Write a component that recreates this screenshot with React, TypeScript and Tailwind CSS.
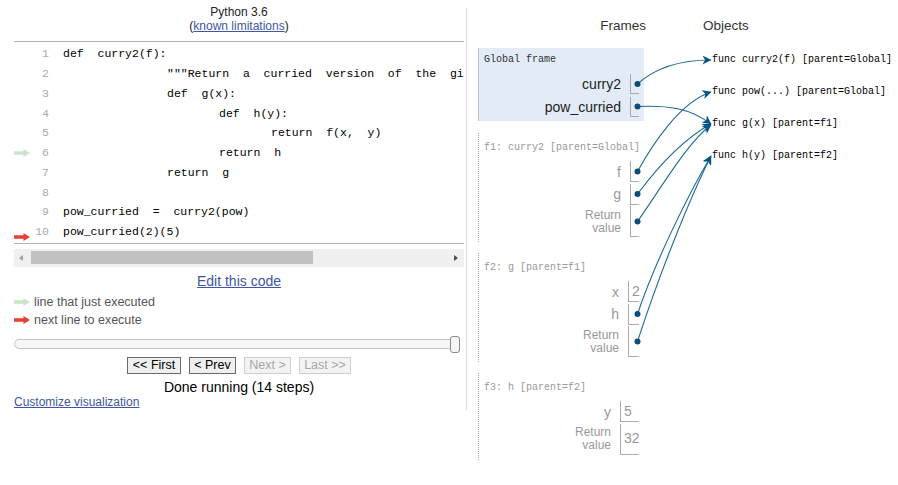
import React from 'react';

const sans = "font-['Liberation_Sans',Arial,sans-serif]";
const mono = "font-['Liberation_Mono','Courier_New',monospace]";

const codeLines = [
  { n: 1, pad: 'pl-0', text: 'def  curry2(f):' },
  { n: 2, pad: 'pl-[104px]', text: '"""Return  a  curried  version  of  the  given  two-argument  function."""' },
  { n: 3, pad: 'pl-[104px]', text: 'def  g(x):' },
  { n: 4, pad: 'pl-[156px]', text: 'def  h(y):' },
  { n: 5, pad: 'pl-[208px]', text: 'return  f(x,  y)' },
  { n: 6, pad: 'pl-[156px]', text: 'return  h' },
  { n: 7, pad: 'pl-[104px]', text: 'return  g' },
  { n: 8, pad: 'pl-0', text: '' },
  { n: 9, pad: 'pl-0', text: 'pow_curried  =  curry2(pow)' },
  { n: 10, pad: 'pl-0', text: 'pow_curried(2)(5)' },
];

function LineArrow({ color }: { color: string }) {
  return (
    <svg width="16" height="8" viewBox="0 0 16 8" className="block shrink-0">
      <path d="M0,2.3 H9.5 V0 L16,4 L9.5,8 V5.7 H0 Z" fill={color} />
    </svg>
  );
}

type Row = { label: string; two?: boolean; value?: string };

function Frame({
  title,
  active,
  rows,
  box,
  outer,
}: {
  title: string;
  active?: boolean;
  rows: Row[];
  box: string;
  outer: string;
}) {
  return (
    <div
      className={
        active
          ? 'w-[166px] bg-[#e2ebf6] border-l border-[#b9c4cc] pt-[6px] pb-[4.5px] ' + outer
          : 'w-[166px] border-l border-dotted border-[#aaaaaa] pt-[9px] pb-[5px] ' + outer
      }
    >
      <div className={mono + (active ? ' pl-[5px] text-[10px] leading-[12px] text-[#333]' : ' pl-[5px] text-[10px] leading-[12px] text-[#999]')}>
        {title}
      </div>
      <div className={active ? 'mt-[8px] flex flex-col gap-[2.5px] pr-[5px]' : 'mt-[7px] flex flex-col gap-[1.5px] pr-[5px]'}>
        {rows.map((r) => (
          <div
            key={r.label}
            className={
              active ? 'flex h-[20px] justify-end' : r.two ? 'flex h-[31px] justify-end' : 'flex h-[21px] justify-end'
            }
          >
            <div
              className={
                active
                  ? 'self-center pr-[9px] text-right text-[14px] leading-[16px] text-[#222]'
                  : r.two
                  ? 'self-center pr-[9px] text-right text-[12px] leading-[13px] text-[#999]'
                  : 'self-center pr-[9px] text-right text-[14px] leading-[16px] text-[#999]'
              }
            >
              {r.two ? (
                <>
                  Return
                  <br />
                  value
                </>
              ) : (
                r.label
              )}
            </div>
            <div className={'flex shrink-0 items-center border-l border-b border-[#aaaaaa] pl-[3px] text-[14px] text-[#999] ' + box}>
              {r.value}
            </div>
          </div>
        ))}
      </div>
    </div>
  );
}

export default function App() {
  return (
    <div className={'relative flex h-[485px] w-[898px] overflow-hidden bg-white ' + sans}>
      {/* Left: code and controls */}
      <div className="flex w-[466px] shrink-0 flex-col pl-[14px] pr-[2px]">
        <div className="pt-[5px] text-center text-[12px] leading-[14px] text-[#222]">
          <div>Python 3.6</div>
          <div>
            (<span className="text-[#3d58a2] underline">known limitations</span>)
          </div>
        </div>

        <div className="mt-[8px] overflow-hidden border-y border-[#b4b4b4] pt-[2px] pb-[1px]">
          {codeLines.map((l) => (
            <div key={l.n} className="flex h-[19.75px] items-center">
              <div className={l.n === 10 ? 'flex w-[16px] shrink-0 self-end pb-[0.5px]' : 'flex w-[16px] shrink-0'}>
                {l.n === 6 && <LineArrow color="#c9e6ca" />}
                {l.n === 10 && <LineArrow color="#e93f34" />}
              </div>
              <div className={mono + ' w-[19px] shrink-0 text-right text-[11.5px] text-[#aaaaaa]'}>{l.n}</div>
              <div className={mono + ' ml-[14px] shrink-0 whitespace-pre text-[11.5px] text-black ' + l.pad}>{l.text}</div>
            </div>
          ))}
        </div>

        {/* horizontal scrollbar */}
        <div className="mt-[5px] flex h-[18px] items-center bg-[#f0f0f0]">
          <div className="ml-[5px] h-0 w-0 border-y-[3.5px] border-r-[4px] border-y-transparent border-r-[#a3a3a3]" />
          <div className="ml-[8px] h-[13px] w-[282px] bg-[#c1c1c1]" />
          <div className="ml-auto mr-[6px] h-0 w-0 border-y-[3.5px] border-l-[4px] border-y-transparent border-l-[#505050]" />
        </div>

        <div className="mt-[6px] text-center text-[14px] leading-[17px] text-[#3d58a2] underline">Edit this code</div>

        <div className="mt-[3.5px] text-[12.5px] leading-[18px] text-[#555]">
          <div className="flex items-center gap-[4px]">
            <LineArrow color="#c9e6ca" />
            <span>line that just executed</span>
          </div>
          <div className="flex items-center gap-[4px]">
            <LineArrow color="#e93f34" />
            <span>next line to execute</span>
          </div>
        </div>

        {/* step slider */}
        <div className="relative mt-[10px] mr-[4px] h-[10px] rounded-full border border-[#c5c5c5] bg-[#f6f6f6]">
          <div className="absolute right-[-1px] top-[-4px] h-[17px] w-[10px] rounded-[3px] border border-[#8a8a8a] bg-[#f6f6f6]" />
        </div>

        <div className="mt-[8px] flex justify-center gap-[8px] text-[12.5px] leading-none">
          <div className="flex h-[17px] w-[54px] items-center justify-center border border-[#6a6a6a] bg-[#efefef] text-black">&lt;&lt; First</div>
          <div className="flex h-[17px] w-[47px] items-center justify-center border border-[#6a6a6a] bg-[#efefef] text-black">&lt; Prev</div>
          <div className="flex h-[17px] w-[47px] items-center justify-center border border-[#cfcfcf] bg-[#f3f3f3] text-[#a8a8a8]">Next &gt;</div>
          <div className="flex h-[17px] w-[52px] items-center justify-center border border-[#cfcfcf] bg-[#f3f3f3] text-[#a8a8a8]">Last &gt;&gt;</div>
        </div>

        <div className="mt-[5px] text-center text-[14px] leading-[16px] text-black">Done running (14 steps)</div>
        <div className="text-[12px] leading-[14px] text-[#3d58a2] underline">Customize visualization</div>
      </div>

      <div className="mt-[8px] h-[402px] w-px shrink-0 bg-[#dddddd]" />

      {/* Right: frames and objects */}
      <div className="flex flex-1 flex-col pt-[18px]">
        <div className="flex text-[13.5px] leading-[16px] text-[#333]">
          <div className="w-[179px] text-right">Frames</div>
          <div className="ml-[57px]">Objects</div>
        </div>

        <div className="mt-[14px] flex">
          <div className="ml-[11px] flex flex-col">
            <Frame
              title="Global frame"
              active
              box="w-[9px]"
              outer=""
              rows={[{ label: 'curry2' }, { label: 'pow_curried' }]}
            />
            <Frame
              title="f1: curry2 [parent=Global]"
              box="w-[9px]"
              outer="mt-[12px]"
              rows={[{ label: 'f' }, { label: 'g' }, { label: 'ret', two: true }]}
            />
            <Frame
              title="f2: g [parent=f1]"
              box="w-[11px]"
              outer="mt-[11px]"
              rows={[{ label: 'x', value: '2' }, { label: 'h' }, { label: 'ret', two: true }]}
            />
            <Frame
              title="f3: h [parent=f2]"
              box="w-[19px]"
              outer="mt-[11px]"
              rows={[{ label: 'y', value: '5' }, { label: 'ret', two: true, value: '32' }]}
            />
          </div>

          <div className={mono + ' ml-[68px] flex flex-col gap-[18px] pt-[5px] text-[10px] leading-[14px] text-black whitespace-pre'}>
            <div>func curry2(f) [parent=Global]</div>
            <div>func pow(...) [parent=Global]</div>
            <div>func g(x) [parent=f1]</div>
            <div>func h(y) [parent=f2]</div>
          </div>
        </div>
      </div>

      {/* pointer arrows */}
      <svg className="pointer-events-none absolute left-0 top-0" width="898" height="485" viewBox="0 0 898 485">
        <defs>
          <marker id="head" viewBox="0 0 10 10" refX="9.5" refY="5" markerWidth="11" markerHeight="9" markerUnits="userSpaceOnUse" orient="auto">
            <path d="M0,0 L10,5 L0,10 L3,5 Z" fill="#005583" />
          </marker>
        </defs>
        <g fill="none" stroke="#1d6a96" strokeWidth="1.1" markerEnd="url(#head)">
          <path d="M637.5,84 C655,68 680,60 711,60" />
          <path d="M637.5,106.5 C668,105 690,108 711,124" />
          <path d="M637.5,171.5 C652,145 680,102 711,92" />
          <path d="M637.5,194 C660,164 685,138 711,124" />
          <path d="M637.5,221.5 C663,185 688,142 711,125" />
          <path d="M637.5,314 C655,262 688,195 711,156" />
          <path d="M637.5,341.5 C660,272 690,198 711,156" />
        </g>
        <g fill="#0a4d76">
          <circle cx="637.5" cy="84" r="3" />
          <circle cx="637.5" cy="106.5" r="3" />
          <circle cx="637.5" cy="171.5" r="3" />
          <circle cx="637.5" cy="194" r="3" />
          <circle cx="637.5" cy="221.5" r="3" />
          <circle cx="637.5" cy="314" r="3" />
          <circle cx="637.5" cy="341.5" r="3" />
        </g>
      </svg>
    </div>
  );
}
